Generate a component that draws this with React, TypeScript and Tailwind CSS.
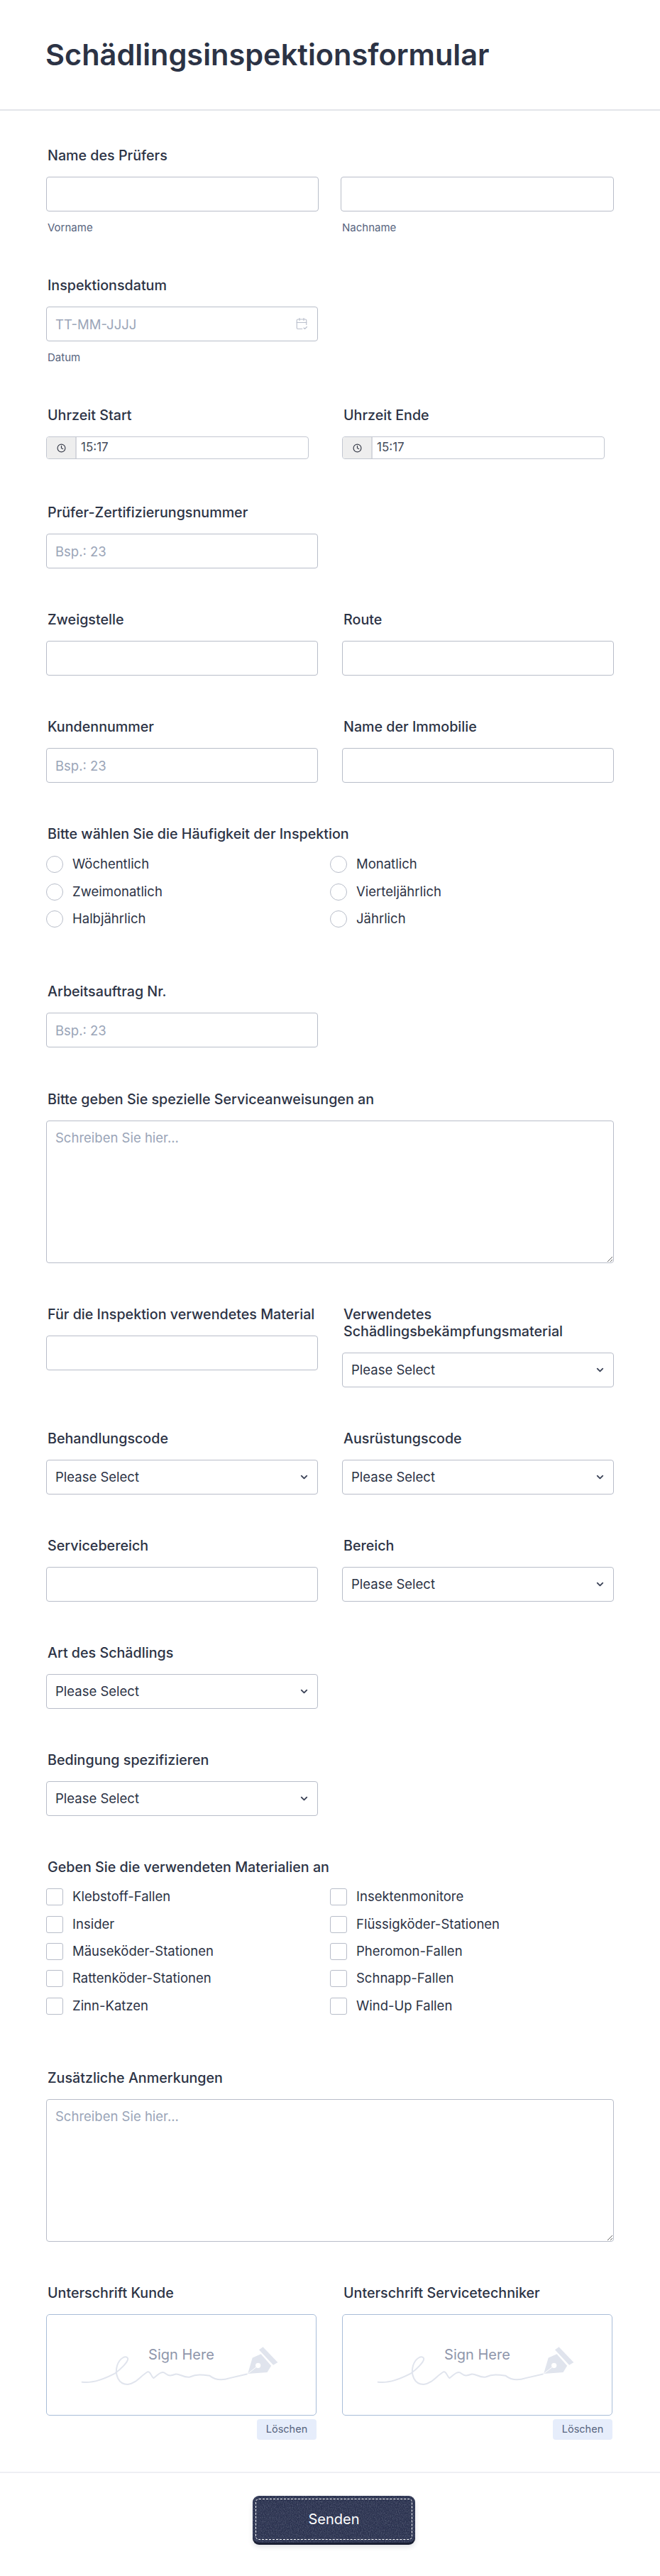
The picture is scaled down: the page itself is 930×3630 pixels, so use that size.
import React from 'react'
import { CalendarCheck2, ChevronDown, Clock } from 'lucide-react'

const inputCls =
  'w-full h-[49px] px-[12px] bg-white border border-[#b8bdc9] rounded-[4px] text-[18.5px] text-[#2c3345] placeholder:text-[#9aa5b8] outline-none'

const labelCls = 'pl-[2px] text-[19.7px] leading-[24px] font-[450] text-[#2c3345]'

const Label = ({ children }: { children: React.ReactNode }) => (
  <div className={`${labelCls} mb-[18px]`}>{children}</div>
)

const Sub = ({ children }: { children: React.ReactNode }) => (
  <div className="pl-[2px] mt-[13px] text-[15px] leading-[20px] text-[#57647e]">{children}</div>
)

const Text = ({ label, placeholder }: { label: string; placeholder?: string }) => (
  <div>
    <Label>{label}</Label>
    <input className={inputCls} placeholder={placeholder} />
  </div>
)

const Select = ({ label }: { label?: React.ReactNode }) => (
  <div>
    {label && <Label>{label}</Label>}
    <div className="relative">
      <select className={`${inputCls} appearance-none`}>
        <option>Please Select</option>
      </select>
      <ChevronDown size={15} strokeWidth={3} className="absolute right-[12px] top-[17px] text-[#3b4357] pointer-events-none" />
    </div>
  </div>
)

const Time = ({ label }: { label: string }) => (
  <div>
    <Label>{label}</Label>
    <div className="flex w-[370px] h-[32px] border border-[#c3c7d1] rounded-[4px] overflow-hidden">
      <div className="w-[42px] bg-[#eeeeee] border-r-2 border-[#d5d7dd] flex items-center justify-center">
        <Clock size={13} strokeWidth={2.2} className="text-[#3b3f4c]" />
      </div>
      <input readOnly value="15:17" className="flex-1 px-[6px] text-[17px] text-[#444a59] outline-none" />
    </div>
  </div>
)

const Radio = ({ label }: { label: string }) => (
  <label className="flex items-center h-[38.4px] text-[18.5px] text-[#2c3345]">
    <span className="w-[24px] h-[24px] rounded-full border border-[#b8bdc9] mr-[13px]" />
    {label}
  </label>
)

const Check = ({ label }: { label: string }) => (
  <label className="flex items-center h-[38.3px] text-[18.5px] text-[#2c3345]">
    <input type="checkbox" className="appearance-none w-[24px] h-[24px] rounded-[3px] border border-[#b8bdc9] mr-[13px]" />
    {label}
  </label>
)

const Signature = ({ label }: { label: string }) => (
  <div className="w-[381px]">
    <Label>{label}</Label>
    <div className="relative h-[143px] border border-[#a9bdd8] rounded-[5px]">
      <svg viewBox="43 65 1141 427" className="absolute inset-0 w-full h-full">
        <path
          d="M190 352 C240 358 290 335 330 315 C350 300 390 265 385 250 C378 235 350 250 340 280 C328 320 345 362 385 362 C420 358 440 325 470 308 C482 304 485 330 495 335 C510 325 530 300 545 315 C560 327 570 325 590 318 C605 315 625 335 650 330 C680 318 700 320 735 325 C760 345 790 345 820 335 L893 318"
          fill="none"
          stroke="#e0e4ed"
          strokeWidth="6"
          strokeLinecap="round"
        />
        <path d="M897 316 L917 248 L953 232 L997 282 L980 310 Z" fill="#e0e4ed" />
        <path d="M962 202 L1025 268 L1006 279 L945 214 Z" fill="#e0e4ed" />
        <circle cx="941" cy="281" r="11" fill="#fff" />
        <path d="M900 314 L936 286" stroke="#fff" strokeWidth="3" />
      </svg>
      <div className="relative text-center pt-[42px] text-[20px] leading-[28px] text-[#8f96ab]">Sign Here</div>
    </div>
    <div className="flex justify-end mt-[5px]">
      <button className="w-[84px] h-[29px] rounded-[4px] bg-[#e6edfb] text-[14.5px] text-[#57647e]">Löschen</button>
    </div>
  </div>
)

const Row = ({ children, className = '' }: { children: React.ReactNode; className?: string }) => (
  <div className={`grid grid-cols-[383px_383px] gap-x-[34px] ${className}`}>{children}</div>
)

const textareaCls =
  'block w-[800px] h-[201px] px-[12px] py-[10px] border border-[#b8bdc9] rounded-[4px] text-[18.5px] placeholder:text-[#9aa5b8] outline-none'

export default function App() {
  return (
    <div className="w-[930px] h-[3630px] bg-white overflow-hidden font-['Inter',sans-serif]">
      <header className="h-[156px] pl-[64px] pt-[50px] border-b-2 border-[#e3e5ea]">
        <h1 className="text-[41.5px] leading-[54px] font-semibold text-[#2c3345]">Schädlingsinspektionsformular</h1>
      </header>

      <main className="pl-[65px] w-[865px]">
        <div className="pt-[51px] grid grid-cols-[384px_385px] gap-x-[31px]">
          <div>
            <Label>Name des Prüfers</Label>
            <input className={inputCls} />
            <Sub>Vorname</Sub>
          </div>
          <div>
            <Label>&nbsp;</Label>
            <input className={inputCls} />
            <Sub>Nachname</Sub>
          </div>
        </div>

        <Row className="mt-[59px]">
          <div>
            <Label>Inspektionsdatum</Label>
            <div className="relative">
              <input className={inputCls} placeholder="TT-MM-JJJJ" />
              <CalendarCheck2 size={18} strokeWidth={1.5} className="absolute right-[14px] top-[15px] text-[#b9bfcc]" />
            </div>
            <Sub>Datum</Sub>
          </div>
        </Row>

        <Row className="mt-[59px]">
          <Time label="Uhrzeit Start" />
          <Time label="Uhrzeit Ende" />
        </Row>

        <Row className="mt-[63px]">
          <Text label="Prüfer-Zertifizierungsnummer" placeholder="Bsp.: 23" />
        </Row>

        <Row className="mt-[60px]">
          <Text label="Zweigstelle" />
          <Text label="Route" />
        </Row>

        <Row className="mt-[60px]">
          <Text label="Kundennummer" placeholder="Bsp.: 23" />
          <Text label="Name der Immobilie" />
        </Row>

        <section className="mt-[60px]">
          <div className={`${labelCls} mb-[12px]`}>Bitte wählen Sie die Häufigkeit der Inspektion</div>
          <div className="grid grid-cols-[400px_400px]">
            {['Wöchentlich', 'Monatlich', 'Zweimonatlich', 'Vierteljährlich', 'Halbjährlich', 'Jährlich'].map((item) => (
              <Radio key={item} label={item} />
            ))}
          </div>
        </section>

        <Row className="mt-[71px]">
          <Text label="Arbeitsauftrag Nr." placeholder="Bsp.: 23" />
        </Row>

        <section className="mt-[61px]">
          <Label>Bitte geben Sie spezielle Serviceanweisungen an</Label>
          <textarea className={textareaCls} placeholder="Schreiben Sie hier..." />
        </section>

        <Row className="mt-[60px] items-start">
          <div>
            <div className={`${labelCls} mb-[18px] whitespace-nowrap`}>Für die Inspektion verwendetes Material</div>
            <input className={inputCls} />
          </div>
          <Select label="Verwendetes Schädlingsbekämpfungsmaterial" />
        </Row>

        <Row className="mt-[60px]">
          <Select label="Behandlungscode" />
          <Select label="Ausrüstungscode" />
        </Row>

        <Row className="mt-[60px]">
          <Text label="Servicebereich" />
          <Select label="Bereich" />
        </Row>

        <Row className="mt-[60px]">
          <Select label="Art des Schädlings" />
        </Row>

        <Row className="mt-[60px]">
          <Select label="Bedingung spezifizieren" />
        </Row>

        <section className="mt-[60px]">
          <div className={`${labelCls} mb-[11px]`}>Geben Sie die verwendeten Materialien an</div>
          <div className="grid grid-cols-[400px_400px]">
            {[
              'Klebstoff-Fallen',
              'Insektenmonitore',
              'Insider',
              'Flüssigköder-Stationen',
              'Mäuseköder-Stationen',
              'Pheromon-Fallen',
              'Rattenköder-Stationen',
              'Schnapp-Fallen',
              'Zinn-Katzen',
              'Wind-Up Fallen',
            ].map((item) => (
              <Check key={item} label={item} />
            ))}
          </div>
        </section>

        <section className="mt-[70px]">
          <Label>Zusätzliche Anmerkungen</Label>
          <textarea className={textareaCls} placeholder="Schreiben Sie hier..." />
        </section>

        <div className="mt-[60px] flex gap-x-[36px]">
          <Signature label="Unterschrift Kunde" />
          <Signature label="Unterschrift Servicetechniker" />
        </div>
      </main>

      <footer className="mt-[45px] border-t-2 border-[#eeeff4] flex justify-center pt-[32px] pl-[11px]">
        <button className="relative w-[229px] h-[66px] rounded-[9px] bg-[#2c3350] text-[20px] text-white shadow-[0_3px_0_#1a1f33,0_6px_6px_rgba(44,51,80,0.15)] overflow-hidden">
          <svg className="absolute inset-0 w-full h-full opacity-40">
            <filter id="denim">
              <feTurbulence type="fractalNoise" baseFrequency="0.9 0.5" numOctaves="2" seed="4" />
              <feColorMatrix values="0 0 0 0 0.55 0 0 0 0 0.6 0 0 0 0 0.7 0 0 0 1.2 -0.45" />
            </filter>
            <rect width="100%" height="100%" filter="url(#denim)" />
          </svg>
          <span className="absolute inset-[4px] rounded-[5px] border border-dashed border-white" />
          <span className="relative">Senden</span>
        </button>
      </footer>
    </div>
  )
}
